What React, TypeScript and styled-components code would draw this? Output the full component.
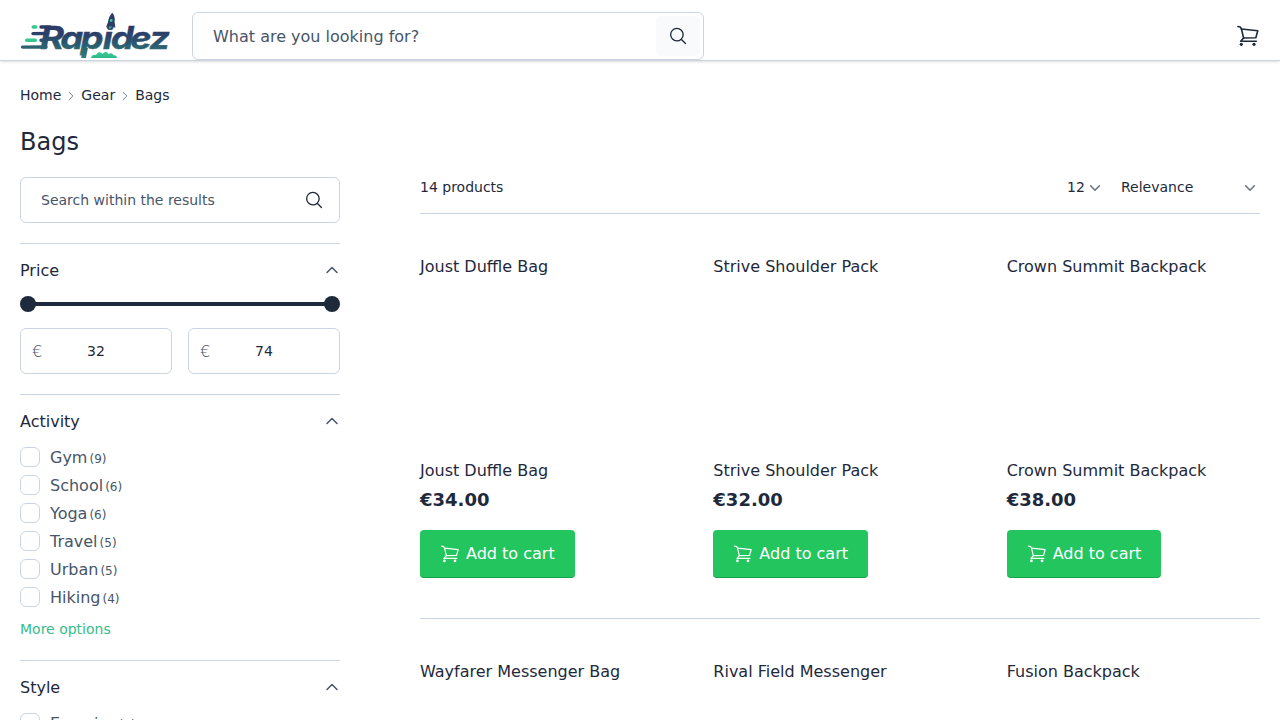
import React from "react";
import styled, { createGlobalStyle } from "styled-components";

const ink = "#1e293b";
const muted = "#475569";
const line = "#cbd5e1";

const GlobalStyle = createGlobalStyle`
  *, *::before, *::after { box-sizing: border-box; }
  body { margin: 0; background: #fff; color: ${ink}; font: 16px/24px "DejaVu Sans", sans-serif; }
  #root { height: 100vh; overflow: hidden; }
  h1, h2, ul, ol, p { margin: 0; padding: 0; font-weight: 400; list-style: none; }
  button, input { font: inherit; color: inherit; margin: 0; }
  button { border: 0; padding: 0; background: none; }
  svg { display: block; flex-shrink: 0; }
`;

const Header = styled.header`
  display: flex;
  align-items: flex-start;
  height: 61px;
  padding: 12px 20px 0;
  border-bottom: 1px solid ${line};
  box-shadow: 0 1px 3px rgba(0, 0, 0, 0.1), 0 1px 2px -1px rgba(0, 0, 0, 0.1);
`;
const LogoLink = styled.a`
  width: 150px;
  margin-right: 22px;
`;
const SearchBox = styled.form<{ $size: "large" | "small" }>`
  display: flex;
  align-items: center;
  width: ${(p) => (p.$size === "large" ? "512px" : "100%")};
  height: ${(p) => (p.$size === "large" ? "48px" : "46px")};
  padding: 0 3px 0 20px;
  font-size: ${(p) => (p.$size === "large" ? "16px" : "14px")};
  background: #fff;
  border: 1px solid ${line};
  border-radius: 6px;
  input { padding-top: ${(p) => (p.$size === "large" ? "2px" : "0")}; }
`;
const SearchInput = styled.input`
  flex: 1;
  min-width: 0;
  padding: 0;
  border: 0;
  outline: 0;
  background: transparent;
  &::placeholder { color: ${muted}; opacity: 1; }
`;
const SearchButton = styled.button<{ $filled?: boolean }>`
  display: grid;
  place-items: center;
  width: 44px;
  height: 40px;
  border-radius: 6px;
  background: ${(p) => (p.$filled ? "#f8fafc" : "transparent")};
`;
const CartLink = styled.a`
  margin: 12px 0 0 auto;
`;

const Breadcrumbs = styled.ol`
  display: flex;
  align-items: center;
  gap: 4px;
  padding: 24px 20px 0;
  font-size: 14px;
  line-height: 20px;
  li { display: flex; align-items: center; gap: 4px; }
  svg { margin-top: 2px; }
`;
const Title = styled.h1`
  padding: 21px 20px 0;
  font-size: 24px;
  line-height: 32px;
`;
const Columns = styled.main`
  display: grid;
  grid-template-columns: 320px 840px;
  gap: 80px;
  padding: 19px 20px 0;
`;

const Facet = styled.section`
  margin-top: 20px;
  padding-top: 15px;
  border-top: 1px solid ${line};
`;
const FacetHeading = styled.h2`
  display: flex;
  align-items: center;
  justify-content: space-between;
  font-size: 16px;
  line-height: 24px;
  svg { margin-bottom: 2px; }
`;
const Slider = styled.div`
  display: flex;
  align-items: center;
  justify-content: space-between;
  height: 16px;
  margin: 13px 0 16px;
  background: linear-gradient(${ink}, ${ink}) center / 304px 4px no-repeat;
`;
const Thumb = styled.span`
  width: 16px;
  height: 16px;
  border-radius: 50%;
  background: ${ink};
`;
const PriceFields = styled.div`
  display: grid;
  grid-template-columns: 1fr 1fr;
  gap: 16px;
`;
const PriceField = styled.label`
  display: grid;
  grid-template-columns: 10px 1fr 10px;
  align-items: center;
  height: 46px;
  padding: 0 11px;
  border: 1px solid ${line};
  border-radius: 6px;
`;
const Currency = styled.span`
  padding-top: 2px;
  font-weight: 300;
  color: ${muted};
`;
const PriceInput = styled.input`
  width: 100%;
  padding: 0;
  border: 0;
  background: transparent;
  text-align: center;
  font-size: 14px;
`;
const Options = styled.ul`
  display: grid;
  gap: 8px;
  padding-top: 13px;
`;
const Option = styled.li`
  display: flex;
  align-items: center;
  height: 20px;
  color: ${muted};
`;
const OptionName = styled.span`
  padding-top: 2px;
`;
const Checkbox = styled.span`
  width: 20px;
  height: 20px;
  margin-right: 10px;
  border: 1px solid ${line};
  border-radius: 6px;
`;
const Count = styled.small`
  margin: 3px 0 0 2px;
  font-size: 12px;
  line-height: 16px;
`;
const More = styled.button`
  display: block;
  margin: 12px 0 21px;
  font-size: 14px;
  line-height: 20px;
  color: #36bc8c;
`;

const Toolbar = styled.div`
  display: flex;
  height: 37px;
  font-size: 14px;
  line-height: 20px;
  border-bottom: 1px solid ${line};
`;
const Select = styled.div<{ $width: number; $inset: number }>`
  display: flex;
  align-items: center;
  justify-content: space-between;
  width: ${(p) => p.$width}px;
  height: 20px;
  margin-right: ${(p) => p.$inset}px;
  svg { margin-top: 1px; }
`;
const Total = styled.p`
  margin-right: auto;
`;
const ProductRow = styled.div`
  display: grid;
  grid-template-columns: repeat(3, 253.33px);
  gap: 40px;
  height: 405px;
  padding-top: 41px;
  border-bottom: 1px solid ${line};
`;
const Picture = styled.div`
  height: 204px;
`;
const Price = styled.p`
  margin: 3px 0 16px;
  font-size: 18px;
  line-height: 28px;
  font-weight: 700;
`;
const AddButton = styled.button`
  display: flex;
  align-items: center;
  gap: 6px;
  height: 48px;
  padding: 0 20px;
  color: #fff;
  background: #22c55e;
  border-bottom: 1px solid #16a34a;
  border-radius: 4px;
`;

const SearchIcon = () => (
  <svg width="20" height="20" viewBox="0 0 24 24" fill="none" stroke={ink} strokeWidth="1.6" strokeLinecap="round" strokeLinejoin="round">
    <path d="m21 21-5.2-5.2m0 0A7.5 7.5 0 1 0 5.2 5.2a7.5 7.5 0 0 0 10.6 10.6Z" />
  </svg>
);

const Chevron = ({ turn = 0, size = 14, color = muted, weight = 1.5 }: { turn?: number; size?: number; color?: string; weight?: number }) => (
  <svg width={size} height={size} viewBox="0 0 16 16" fill="none" stroke={color} strokeWidth={weight} strokeLinecap="round" strokeLinejoin="round">
    <path d="m3 5.5 5 5 5-5" transform={`rotate(${turn} 8 8)`} />
  </svg>
);

const CartIcon = ({ size, color, weight }: { size: number; color: string; weight: number }) => (
  <svg width={size} height={size} viewBox="0 0 24 24" fill="none" stroke={color} strokeWidth={weight} strokeLinecap="round" strokeLinejoin="round">
    <path d="M1.9 2.5 4.3 3l1.2 2.2L7.6 14" />
    <path d="M5.5 5 21.8 6.8l-2 7-12.2.2-2.9 3.3h15.6" />
    <circle cx="5.3" cy="20.3" r="1.6" fill={color} stroke="none" />
    <circle cx="18" cy="20.3" r="1.6" fill={color} stroke="none" />
  </svg>
);

const Logo = () => (
  <svg width="150" height="46" viewBox="0 0 150 46">
    <defs>
      <linearGradient id="word" gradientUnits="userSpaceOnUse" x1="0" y1="12" x2="0" y2="44">
        <stop offset="0" stopColor="#2b3766" />
        <stop offset="0.35" stopColor="#2b4269" />
        <stop offset="1" stopColor="#2d7a77" />
      </linearGradient>
      <linearGradient id="mint" x1="0" y1="0" x2="0" y2="1">
        <stop offset="0" stopColor="#35cf91" />
        <stop offset="1" stopColor="#2fb58d" />
      </linearGradient>
    </defs>
    <text y="36.8" x="17.2 34.6 52.2 71.4 78.2 94.8 111.4" transform="scale(1.16 1)" fill="url(#word)" stroke="url(#word)" strokeWidth="0.4" fontFamily="Inter, sans-serif" fontSize="31.5" fontWeight="700" fontStyle="italic">
      Rapidez
    </text>
    <path d="m63.2 36-2.1 10h4.8l2-10Z" fill="url(#word)" />
    <g fill="none" stroke="url(#word)" strokeWidth="3.4" strokeLinecap="round">
      <path d="M21 15 30 14.9M13 21.6 26 21.5M21 28.3 26 28.2M2.5 35.1 26 35" />
    </g>
    <rect x="11.5" y="13.2" width="6" height="3.5" rx="1.7" fill="#35c98f" />
    <rect x="5" y="26.5" width="12" height="3.5" rx="1.7" fill="#35c98f" />
    <path d="M86 15.5 88 10C88.5 6 90 3 92.4.8c2 2.5 2.8 5.5 2.2 9l.8 6-3.3-1.6h-3Z" fill="#2b3d68" />
    <circle cx="91.2" cy="8.5" r="1.4" fill="#35c98f" />
    <path d="m88.8 14.4 3.5.2-2.6 3Z" fill="#35b68e" />
    <path d="M71 46c1-3 3-3.8 5-2.8 1-3.5 5-4 6.5-1.2 2-3 5.5-2.5 6 .3 2-1.8 4.5-1 5 1 1.7-.6 3.4.5 3.5 2.7Z" fill="url(#mint)" />
  </svg>
);

const activities: [string, number][] = [["Gym", 9], ["School", 6], ["Yoga", 6], ["Travel", 5], ["Urban", 5], ["Hiking", 4]];
const products = [
  { name: "Joust Duffle Bag", price: "€34.00" },
  { name: "Strive Shoulder Pack", price: "€32.00" },
  { name: "Crown Summit Backpack", price: "€38.00" },
];
const nextProducts = ["Wayfarer Messenger Bag", "Rival Field Messenger", "Fusion Backpack"];

const FacetTitle = ({ children }: { children: React.ReactNode }) => (
  <FacetHeading>
    {children}
    <Chevron turn={180} size={16} />
  </FacetHeading>
);

const FacetOption = ({ name, count }: { name: string; count: number }) => (
  <Option>
    <Checkbox />
    <OptionName>{name}</OptionName>
    <Count>({count})</Count>
  </Option>
);

export default function App() {
  return (
    <>
      <GlobalStyle />
      <Header>
        <LogoLink><Logo /></LogoLink>
        <SearchBox $size="large">
          <SearchInput placeholder="What are you looking for?" />
          <SearchButton type="button" $filled><SearchIcon /></SearchButton>
        </SearchBox>
        <CartLink><CartIcon size={24} color={ink} weight={1.6} /></CartLink>
      </Header>
      <Breadcrumbs>
        <li>Home <Chevron turn={-90} size={12} weight={1} /></li>
        <li>Gear <Chevron turn={-90} size={12} weight={1} /></li>
        <li>Bags</li>
      </Breadcrumbs>
      <Title>Bags</Title>
      <Columns>
        <aside>
          <SearchBox $size="small">
            <SearchInput placeholder="Search within the results" />
            <SearchButton type="button"><SearchIcon /></SearchButton>
          </SearchBox>
          <Facet>
            <FacetTitle>Price</FacetTitle>
            <Slider><Thumb /><Thumb /></Slider>
            <PriceFields>
              {["32", "74"].map((value) => (
                <PriceField key={value}>
                  <Currency>€</Currency>
                  <PriceInput defaultValue={value} />
                </PriceField>
              ))}
            </PriceFields>
          </Facet>
          <Facet>
            <FacetTitle>Activity</FacetTitle>
            <Options>
              {activities.map(([name, count]) => <FacetOption key={name} name={name} count={count} />)}
            </Options>
            <More>More options</More>
          </Facet>
          <Facet>
            <FacetTitle>Style</FacetTitle>
            <Options><FacetOption name="Exercise" count={5} /></Options>
          </Facet>
        </aside>
        <section>
          <Toolbar>
            <Total>14 products</Total>
            <Select $width={34.5} $inset={19.5}>12 <Chevron size={14} color="#6b7280" weight={1.8} /></Select>
            <Select $width={135.5} $inset={3.5}>Relevance <Chevron size={14} color="#6b7280" weight={1.8} /></Select>
          </Toolbar>
          <ProductRow>
            {products.map(({ name, price }) => (
              <article key={name}>
                <Picture>{name}</Picture>
                <p>{name}</p>
                <Price>{price}</Price>
                <AddButton><CartIcon size={20} color="#fff" weight={1.4} />Add to cart</AddButton>
              </article>
            ))}
          </ProductRow>
          <ProductRow>
            {nextProducts.map((name) => <Picture key={name}>{name}</Picture>)}
          </ProductRow>
        </section>
      </Columns>
    </>
  );
}
